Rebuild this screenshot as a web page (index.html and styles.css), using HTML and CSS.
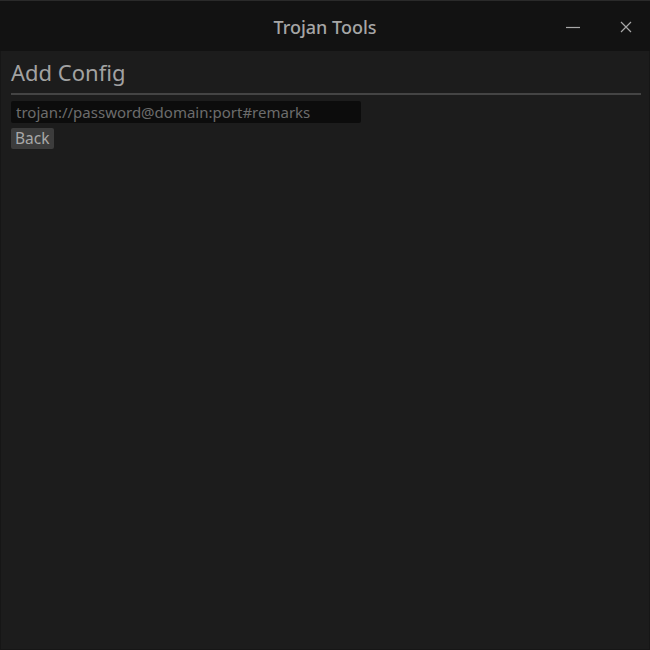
FILE: index.html
```html
<!DOCTYPE html>
<html>
<head>
<meta charset="utf-8">
<link rel="stylesheet" href="styles.css">
</head>
<body>
<div class="window">
  <header class="titlebar">
    <div class="title">Trojan Tools</div>
    <div class="controls">
      <svg class="ctl" width="16" height="16" viewBox="0 0 16 16"><path d="M1 8.5h14" stroke="#a8a8a8" stroke-width="1.2"/></svg>
      <svg class="ctl" width="16" height="16" viewBox="0 0 16 16"><path d="M3 3l10 10M13 3L3 13" stroke="#a8a8a8" stroke-width="1.2"/></svg>
    </div>
  </header>
  <main class="content">
    <h1 class="heading">Add Config</h1>
    <div class="sep"></div>
    <input class="field" type="text" placeholder="trojan://password@domain:port#remarks">
    <button class="btn">Back</button>
  </main>
</div>
</body>
</html>
```
FILE: styles.css
```css
html, body {
  margin: 0;
  padding: 0;
  width: 650px;
  height: 650px;
  background: #1c1c1c;
  overflow: hidden;
  font-family: "Noto Sans", "Open Sans", sans-serif;
}
.window {
  display: flex;
  flex-direction: column;
  height: 650px;
}
.titlebar {
  height: 51px;
  flex: none;
  background: #121212;
  border-top: 1px solid #2a2a2a;
  box-sizing: border-box;
  position: relative;
  display: flex;
  align-items: center;
  justify-content: center;
}
.title {
  color: #a6a6a6;
  font-size: 18px;
  font-weight: 500;
  margin-top: 1px;
}
.controls {
  position: absolute;
  right: 16px;
  top: 18px;
  display: flex;
  gap: 37px;
}
.content {
  flex: 1;
  background: #1c1c1c;
  border-left: 1px solid #161616;
  border-right: 1px solid #161616;
  border-bottom: 1px solid #161616;
  padding: 6px 8px 0 10px;
  display: flex;
  flex-direction: column;
  align-items: flex-start;
}
.heading {
  margin: 0;
  font-size: 22px;
  font-weight: 400;
  color: #a2a2a2;
  line-height: 30px;
}
.sep {
  align-self: stretch;
  height: 2px;
  background: #444444;
  margin-top: 6px;
}
.field {
  margin-top: 6px;
  width: 350px;
  height: 22px;
  box-sizing: border-box;
  background: #0c0c0c;
  border: none;
  border-radius: 2px;
  padding: 0 5px;
  font-family: inherit;
  font-size: 15px;
  color: #a0a0a0;
  outline: none;
}
.field::placeholder {
  color: #6c6c6c;
}
.btn {
  margin-top: 5px;
  height: 21px;
  padding: 0 4px;
  background: #3c3c3c;
  border: none;
  border-radius: 2px;
  font-family: inherit;
  font-size: 15.5px;
  color: #a8a8a8;
  line-height: 21px;
}
```
